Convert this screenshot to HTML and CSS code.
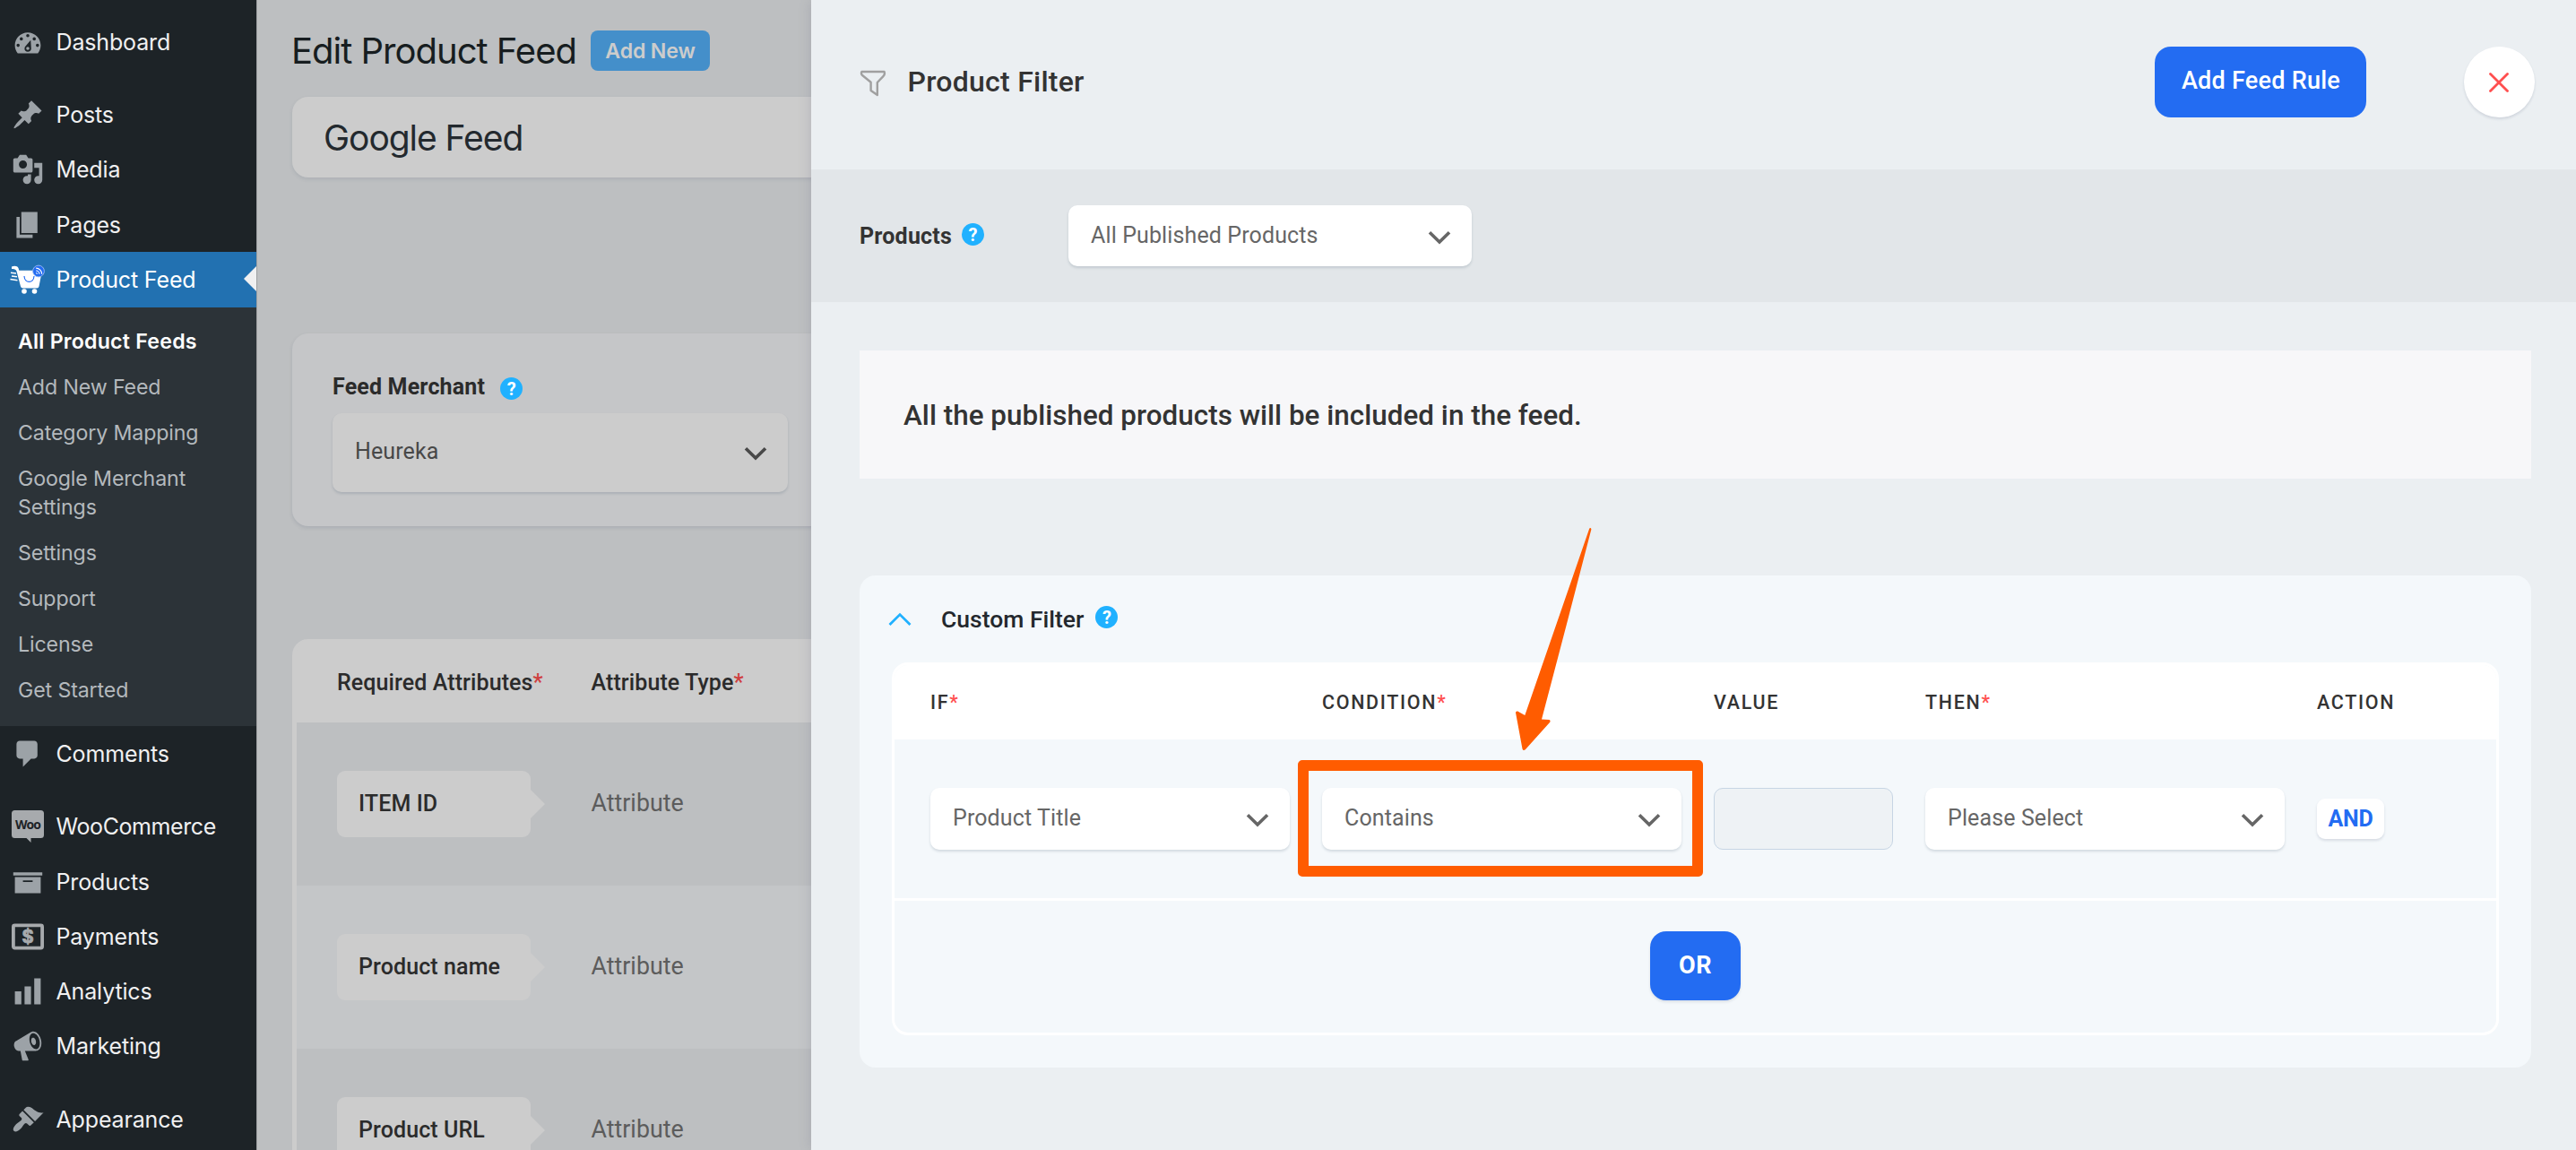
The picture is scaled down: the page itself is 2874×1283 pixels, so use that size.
FILE: index.html
```html
<!DOCTYPE html>
<html lang="en">
<head>
<meta charset="utf-8">
<title>Edit Product Feed</title>
<link rel="stylesheet" href="styles.css">
</head>
<body>
<svg class="sprite" aria-hidden="true">
  <symbol id="chevron" viewBox="0 0 26 16"><path d="M2 2.200 13 13 24 2.200" fill="none" stroke="currentColor" stroke-width="3.600"/></symbol>
</svg>
<div class="app">
  <nav class="sidebar">
    <a class="item"><svg class="icon" viewBox="0 0 20 20"><path fill-rule="evenodd" d="M3.76 17h12.48c1.1-1.37 1.76-3.11 1.76-5 0-4.42-3.58-8-8-8s-8 3.58-8 8c0 1.89.66 3.63 1.76 5zM10 5a1 1 0 1 1 0 2 1 1 0 0 1 0-2zM6 7a1 1 0 1 1 0 2 1 1 0 0 1 0-2zm8 0a1 1 0 1 1 0 2 1 1 0 0 1 0-2zM4 11a1 1 0 1 1 0 2 1 1 0 0 1 0-2zm12 0a1 1 0 1 1 0 2 1 1 0 0 1 0-2zm-4.2-2.2.3 5.2c0 1.2-.9 2-2.1 2s-2-.9-2-2c0-.6.2-1 .5-1.400zM10 12.900a1 1 0 1 0 0 2 1 1 0 0 0 0-2z"/></svg><span>Dashboard</span></a>
    <div class="sep"></div>
    <a class="item"><svg class="icon" viewBox="0 0 20 20"><path d="M10.44 3.02l1.82-1.82 6.36 6.35-1.83 1.82c-1.05-.68-2.48-.57-3.41.36l-.75.75c-.92.93-1.04 2.35-.35 3.41l-1.83 1.82-2.41-2.41-2.8 2.79c-.42.42-3.38 2.71-3.8 2.29s1.86-3.39 2.28-3.81l2.79-2.79L4.1 9.36l1.83-1.82c1.05.69 2.48.57 3.4-.36l.75-.75c.93-.92 1.05-2.35.36-3.41z"/></svg><span>Posts</span></a>
    <a class="item"><svg class="icon" viewBox="0 0 20 20"><path d="M13 11V4c0-.55-.45-1-1-1h-1.67L9 1H5L3.67 3H2c-.55 0-1 .45-1 1v7c0 .55.45 1 1 1h10c.55 0 1-.45 1-1zM7 4.5c1.38 0 2.5 1.12 2.5 2.5S8.38 9.5 7 9.5 4.5 8.38 4.5 7 5.62 4.5 7 4.5zM14 6h5v10.5c0 1.38-1.12 2.5-2.5 2.5S14 17.88 14 16.5s1.12-2.5 2.5-2.5c.17 0 .34.02.5.05V9h-3V6zm-4 8.05V13h2v3.5c0 1.38-1.12 2.5-2.5 2.5S7 17.88 7 16.5 8.12 14 9.5 14c.17 0 .34.02.5.05z"/></svg><span>Media</span></a>
    <a class="item"><svg class="icon" viewBox="0 0 20 20"><path d="M6 15V2h10v13H6zm-1 1h8v2H3V5h2v11z"/></svg><span>Pages</span></a>
    <a class="item item-current">
      <svg class="icon cart" viewBox="0 0 40 34">
        <path d="M2 2.500C5 1 8.500 1.500 9.500 4l.8 2.700H36L32.500 24.500q-.4 2-2.500 2H14.500q-2 0-2.500-2L7.500 7.500Q6.500 4.500 2 5z" fill="#fff"/>
        <path d="M1 9.300l6 .7M2 13l6 .8M.5 16.500l8 1.200" stroke="#fff" stroke-width="1.500"/>
        <circle cx="16" cy="30" r="2.800" fill="#fff"/><circle cx="27.500" cy="30" r="2.800" fill="#fff"/>
        <path d="M16 13c.5 8.500 10.500 8.500 11 0" fill="none" stroke="#236cf2" stroke-width="1.200"/>
        <circle cx="32" cy="7.500" r="6.400" fill="#236cf2" stroke="#9dbcf2" stroke-width=".9"/>
        <path d="M29.200 4.200c3.500 0 6.500 3 6.500 6.500M29.200 7c2 0 3.700 1.700 3.700 3.700M29.200 9.500a1.200 1.200 0 0 1 1.200 1.200" fill="none" stroke="#fff" stroke-width="1.200"/>
      </svg><span>Product Feed</span></a>
    <div class="submenu">
      <a class="sub sub-current">All Product Feeds</a>
      <a class="sub">Add New Feed</a>
      <a class="sub">Category Mapping</a>
      <a class="sub">Google Merchant Settings</a>
      <a class="sub">Settings</a>
      <a class="sub">Support</a>
      <a class="sub">License</a>
      <a class="sub">Get Started</a>
    </div>
    <a class="item"><svg class="icon" viewBox="0 0 20 20"><path d="M5 2h9c1.1 0 2 .9 2 2v7c0 1.100-.9 2-2 2h-2l-5 5v-5H5c-1.100 0-2-.9-2-2V4c0-1.100.9-2 2-2z"/></svg><span>Comments</span></a>
    <div class="sep"></div>
    <a class="item woo"><span class="icon woo-icon"><svg viewBox="0 0 36 36"><path d="M3.500 0h29A3.500 3.500 0 0 1 36 3.500v24a3.500 3.500 0 0 1-3.500 3.500H21.500v5L16.500 31h-13A3.500 3.500 0 0 1 0 27.500v-24A3.500 3.500 0 0 1 3.500 0z"/></svg><b>Woo</b></span><span>WooCommerce</span></a>
    <a class="item"><svg class="icon" viewBox="0 0 20 20"><path d="M19 4v2H1V4h18zM2 7h16v10H2V7zm11 3V9H7v1h6z"/></svg><span>Products</span></a>
    <a class="item"><svg class="icon" viewBox="0 0 36 36"><rect x="1.900" y="5.400" width="32.200" height="25.200" rx="1.500" fill="none" stroke="#a7aaad" stroke-width="3.800"/><text x="18" y="25" text-anchor="middle" class="dollar">$</text></svg><span>Payments</span></a>
    <a class="item"><svg class="icon" viewBox="0 0 20 20"><path d="M18 18V2h-4v16h4zm-6 0V7H8v11h4zm-6 0v-8H2v8h4z"/></svg><span>Analytics</span></a>
    <a class="item"><svg class="icon" viewBox="0 0 20 20"><path d="M18.15 5.94c.46 1.62.38 3.22-.02 4.48-.42 1.28-1.26 2.18-2.3 2.48-.16.06-.26.06-.4.06-.06.02-.12.02-.18.02-.06.02-.14.02-.22.02h-6.8l2.22 5.5c.02.14-.06.26-.14.34-.08.1-.24.16-.34.16H6.95c-.1 0-.26-.06-.34-.16-.08-.08-.16-.2-.14-.34l-1-5.500H4.250l-.02-.02c-.5.06-1.080-.18-1.540-.62s-.88-1.080-1.060-1.880c-.24-.8-.2-1.560-.02-2.200.18-.62.58-1.080 1.060-1.300l.02-.02 9-5.400c.1-.06.18-.1.24-.16.06-.04.14-.08.24-.12.16-.08.28-.12.5-.18 1.040-.3 2.240.1 3.220.98s1.840 2.240 2.260 3.860zm-2.580 5.980h-.02c.4-.1.74-.34 1.040-.7.58-.7.86-1.760.86-3.040 0-.64-.1-1.300-.28-1.980-.34-1.360-1.020-2.500-1.780-3.240s-1.680-1.100-2.460-.88c-.82.22-1.400.96-1.700 2-.32 1.040-.28 2.360.06 3.720.38 1.360 1 2.500 1.800 3.240.78.74 1.620 1.100 2.480.88zm-2.540-7.080c.22-.04.42-.02.62.04.38.16.76.48 1.020 1s.42 1.200.42 1.780c0 .3-.04.56-.12.8-.18.48-.44.84-.86.94-.34.1-.8-.06-1.140-.4s-.64-.86-.78-1.500c-.18-.62-.12-1.240.02-1.720s.48-.84.82-.94z"/></svg><span>Marketing</span></a>
    <div class="sep"></div>
    <a class="item"><svg class="icon" viewBox="0 0 20 20"><path d="M14.480 11.060L7.410 3.990l1.500-1.500c.5-.56 2.300-.47 3.510.32 1.210.8 1.430 1.280 2.910 2.100 1.180.64 2.450 1.260 4.450.85zm-.71.71L6.700 4.700 4.930 6.470c-.39.39-.39 1.020 0 1.410l1.060 1.060c.39.39.39 1.030 0 1.420-.6.6-1.430 1.110-2.210 1.690-.35.26-.7.53-1.010.84C1.430 14.230.4 16.080 1.400 17.070c.99 1 2.840-.03 4.180-1.360.31-.31.58-.66.85-1.020.57-.78 1.080-1.610 1.690-2.210.39-.39 1.020-.39 1.410 0l1.060 1.060c.39.39 1.020.39 1.410 0z"/></svg><span>Appearance</span></a>
  </nav>

  <main class="content">
    <header class="page-head"><h1>Edit Product Feed</h1><a class="add-new">Add New</a></header>
    <div class="feed-title">Google Feed</div>
    <section class="merchant">
      <div class="merchant-label"><span>Feed Merchant</span><i class="help">?</i></div>
      <div class="select select-dim"><span>Heureka</span><svg><use href="#chevron"/></svg></div>
    </section>
    <section class="attributes">
      <div class="attr-head"><span>Required Attributes<b class="req">*</b></span><span>Attribute Type<b class="req">*</b></span></div>
      <div class="attr-row"><span class="tag">ITEM ID</span><span>Attribute</span></div>
      <div class="attr-row alt"><span class="tag">Product name</span><span>Attribute</span></div>
      <div class="attr-row"><span class="tag">Product URL</span><span>Attribute</span></div>
    </section>
  </main>

  <aside class="drawer">
    <header class="drawer-head">
      <svg class="funnel" viewBox="0 0 30 30"><path d="M2.400 2h25.200q1 3.200-1.200 5.200L19.800 14v14l-7.200-5v-9.300L2.800 5.800Q1.400 4.200 2.400 2z" fill="none" stroke="#a0a0a0" stroke-width="2.400" stroke-linejoin="round"/></svg>
      <h2>Product Filter</h2>
      <button class="primary add-rule">Add Feed Rule</button>
      <button class="close"><svg viewBox="0 0 22 22"><path d="M1.500 1.500l19 19M20.500 1.500l-19 19" stroke="#ff4f4f" stroke-width="2.800" stroke-linecap="round"/></svg></button>
    </header>
    <div class="toolbar">
      <strong>Products</strong><i class="help">?</i>
      <div class="select products-select"><span>All Published Products</span><svg><use href="#chevron"/></svg></div>
    </div>
    <p class="notice">All the published products will be included in the feed.</p>
    <section class="filter">
      <div class="filter-title"><svg class="toggle" viewBox="0 0 26 16"><path d="M1.500 14 13 2.600 24.500 14" fill="none" stroke="#20b1ff" stroke-width="2.800"/></svg><span>Custom Filter</span><i class="help">?</i></div>
      <div class="rules">
        <div class="rule-grid rule-head"><span>IF<b class="req">*</b></span><span>CONDITION<b class="req">*</b></span><span>VALUE</span><span>THEN<b class="req">*</b></span><span>ACTION</span></div>
        <div class="rule-grid rule-row">
          <div class="select"><span>Product Title</span><svg><use href="#chevron"/></svg></div>
          <div class="select"><span>Contains</span><svg><use href="#chevron"/></svg></div>
          <div class="value-input"></div>
          <div class="select"><span>Please Select</span><svg><use href="#chevron"/></svg></div>
          <button class="and">AND</button>
        </div>
        <div class="or-row"><button class="primary or">OR</button></div>
      </div>
    </section>
  </aside>
  <div class="highlight"></div>
  <svg class="arrow" viewBox="0 0 88 250"><path d="M84.300 1.500q1.600-1.200 2.100 1L58.800 108.800 31 214.600l8.400.4q1.800.6.8 2.800L12.800 248.200q-2.400 1.800-3.300-.8L2 207q.2-2 2.200-1.400l8.100 4.400L47.300 108.800z" fill="#ff5c00"/></svg>
</div>
</body>
</html>
```
FILE: styles.css
```css
* { box-sizing: border-box; }
body { margin: 0; background: #bdbfc1; font-family: Inter, "Liberation Sans", sans-serif; }
h1, h2, p { margin: 0; }
button { border: 0; padding: 0; }
.sprite { display: none; }
.app { position: relative; display: flex; width: 2874px; height: 1283px; overflow: hidden; }

/* Admin menu */
.sidebar { flex: none; width: 286px; padding-top: 16px; background: #1d2327; }
.item { position: relative; display: flex; align-items: center; height: 61.300px; padding-left: 13px; font-size: 25px; letter-spacing: -.15px; line-height: 30px; color: #f0f0f1; }
.icon { flex: none; width: 36px; height: 36px; margin-right: 13.500px; fill: #9ca2a7; }
.icon.cart { width: 40px; height: 34px; margin: 0 11.500px 0 -2px; }
.sep { height: 20.200px; }
.item-current { height: 62px; background: #2271b1; color: #fff; }
.item-current::after { content: ""; position: absolute; right: 0; top: 16px; border: 14px solid transparent; border-left: 0; border-right-color: #f0f0f1; }
.woo { letter-spacing: -.4px; }
.woo-icon { display: grid; fill: #a7aaad; }
.woo-icon > * { grid-area: 1 / 1; }
.woo-icon b { align-self: start; justify-self: center; padding-top: 4px; font: 700 14px/24px "Open Sans", sans-serif; letter-spacing: -.9px; color: #1d2327; }
.dollar { font: 700 20px Inter, sans-serif; fill: #a7aaad; stroke: #a7aaad; stroke-width: .8px; }
.submenu { padding: 13.500px 20px 13.400px; background: #2c3338; }
.sub { display: block; padding: 9.600px 0 9.500px; font-size: 23.200px; line-height: 31.900px; letter-spacing: -.13px; color: #b4b9bd; }
.sub-current { font-weight: 600; letter-spacing: .2px; color: #fff; }

/* Dimmed page */
.content { flex: 1; min-width: 0; padding-left: 40px; border-left: 1px solid #9fa1a3; }
.page-head { display: flex; align-items: center; height: 108px; padding-top: 5px; }
.page-head h1 { width: 332px; margin-left: -2px; font-size: 40px; font-weight: 400; letter-spacing: -1px; line-height: 50px; color: #171d20; white-space: nowrap; }
.add-new { display: block; width: 133px; height: 45px; margin-left: 2px; border-radius: 8px; background: #448fca; color: #ccc; font-weight: 600; font-size: 23.200px; letter-spacing: -.2px; line-height: 46px; text-align: center; }
.feed-title { height: 90px; margin-left: -1px; padding-left: 35px; border-radius: 18px; background: #ccc; box-shadow: 0 2px 4px rgba(60,70,100,.12); font-size: 39px; line-height: 91px; letter-spacing: -1.050px; color: #23292e; }
.merchant, .attributes, .drawer, .drawer button { font-family: Roboto, "Liberation Sans", sans-serif; }
.merchant { height: 215px; margin: 174px 0 0 -1px; padding: 48px 45px 0; border-radius: 18px; background: #c5c6c8; box-shadow: 0 2px 4px rgba(60,70,100,.14); }
.merchant-label { display: flex; align-items: center; height: 24px; margin-bottom: 17px; font-weight: 700; font-size: 25px; letter-spacing: .17px; line-height: 24px; color: #2b2b2b; }
.help { display: inline-block; width: 25px; height: 25px; border-radius: 50%; background: #20b1ff; color: #fff; font: 700 20px/26px Roboto, sans-serif; letter-spacing: 0; text-align: center; }
.merchant-label .help { margin: 2px 0 0 17px; }
.select { display: flex; align-items: center; justify-content: space-between; height: 69px; padding: 0 23px 1px 25px; border-radius: 10px; background: #fff; box-shadow: 0 2px 3px rgba(40,60,90,.16); font-size: 25px; letter-spacing: .12px; line-height: 30px; color: #666; }
.select svg { width: 26px; height: 16px; margin-top: 4px; }
.select-dim { width: 508px; height: 88px; padding-bottom: 2px; background: #ccc; color: #484848; }
.attributes { height: 700px; margin: 126px 0 0 -1px; border: 5px solid #ccc; border-top: 0; border-radius: 18px; overflow: hidden; background: #ccc; }
.attr-head, .attr-row { display: grid; grid-template-columns: 283.500px 1fr; align-items: center; padding-left: 45px; }
.attr-head { height: 93px; padding-top: 3px; font-weight: 500; font-size: 25px; letter-spacing: .1px; color: #2b2b2b; }
.attr-row { height: 182px; background: #bdbfc1; font-size: 26.800px; color: #5c5c5c; }
.attr-row > span:last-child { padding-bottom: 2px; }
.attr-row.alt { background: #c4c6c8; }
.tag { position: relative; display: block; width: 216px; height: 74px; padding-left: 24px; border-radius: 9px; background: #ccc; font-weight: 500; font-size: 25px; letter-spacing: .1px; line-height: 74px; color: #2b2b2b; }
.tag::after { content: ""; position: absolute; left: 100%; top: 21px; border: 16px solid transparent; border-right: 0; border-left-color: #ccc; }
.req { font-weight: inherit; color: #ff4f4f; }
.attributes .req { color: #cf3f3f; }

/* Drawer */
.drawer { position: absolute; top: 0; right: 0; bottom: 0; width: 1969px; background: #ebeff2; box-shadow: 0 0 14px rgba(80,80,110,.2); }
.drawer-head { display: flex; align-items: center; height: 189px; padding: 0 46px 6px 54px; }
.funnel { width: 30px; height: 30px; margin-top: 3px; }
.drawer-head h2 { margin: -1px auto 0 23.500px; font-size: 32px; font-weight: 500; letter-spacing: .25px; line-height: 40px; color: #333; }
.primary { background: #236cf2; color: #fff; border-radius: 18px; }
.add-rule { width: 236px; height: 79px; padding: 0 0 4px 1px; font-size: 27px; font-weight: 500; letter-spacing: .26px; }
.close { display: grid; place-items: center; width: 79px; height: 79px; margin-left: 109px; padding-right: 1px; border-radius: 50%; background: #fff; box-shadow: 0 2px 3px rgba(40,60,90,.14); }
.close svg { width: 22px; height: 22px; }
.toolbar { display: flex; align-items: center; height: 148px; padding-left: 54px; background: #e2e6e9; }
.toolbar strong { width: 114px; padding-top: 2px; font-size: 25px; letter-spacing: .2px; line-height: 30px; color: #333; }
.toolbar .help { margin-top: -3px; }
.toolbar .select { width: 450px; height: 68px; margin-left: 94px; }
.notice { height: 143px; margin: 54px 50px 108px 54px; padding-left: 49px; background: #f7f7f9; font-size: 31.400px; font-weight: 500; letter-spacing: .03px; line-height: 145px; color: #333; }
.filter { height: 549px; margin: 0 50px 0 54px; padding: 0 36px; border-radius: 18px; background: #f4f8fb; }
.filter-title { display: flex; align-items: center; height: 97px; font-size: 26.500px; font-weight: 500; color: #23282d; }
.toggle { width: 26px; height: 16px; margin: 0 33px 0 -4px; }
.filter-title .help { margin: -5px 0 0 13px; }
.rules { height: 416px; border: 3px solid #fff; border-radius: 18px; overflow: hidden; }
.rule-grid { display: grid; grid-template-columns: 401px 401px 200px 401px 1fr; column-gap: 36px; align-items: center; padding-left: 40px; }
.rule-head { height: 83px; padding-bottom: 1px; background: #fff; font-size: 21.450px; font-weight: 500; letter-spacing: 1.700px; color: #333; }
.rule-row { height: 180px; border-bottom: 3px solid #fff; }
.value-input { height: 69px; border: 1px solid #c7d5e4; border-radius: 10px; background: #eef2f5; }
.and { width: 75px; height: 45px; border-radius: 9px; background: #fff; box-shadow: 0 2px 3px rgba(40,60,90,.14); font-size: 25px; font-weight: 700; color: #236cf2; letter-spacing: -.3px; }
.or-row { display: flex; justify-content: center; padding-top: 34px; }
.or { width: 101px; height: 77px; padding-bottom: 1px; font-size: 27px; font-weight: 700; letter-spacing: .5px; box-shadow: 0 2px 3px rgba(40,60,90,.12); }

/* Annotation over the page */
.highlight { position: absolute; left: 1448px; top: 848px; width: 452px; height: 130px; border: 12px solid #ff5c00; border-radius: 5px; }
.arrow { position: absolute; left: 1689px; top: 588px; width: 88px; height: 250px; }
```
